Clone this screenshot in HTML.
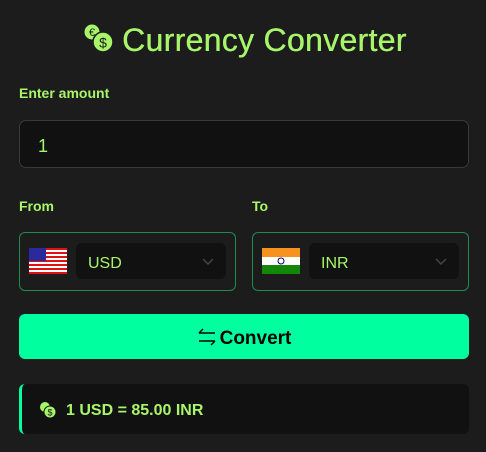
<!DOCTYPE html>
<html><head><style>
body{margin:0;background:#1c1c1c;width:486px;height:452px;overflow:hidden;font-family:"Liberation Sans",sans-serif;color:#a8f56a;position:relative}
.a{position:absolute}
h1{position:absolute;left:122px;top:20px;margin:0;font-size:32px;font-weight:normal;line-height:40px;color:#a8f56a;letter-spacing:0.3px;text-shadow:0.4px 0 0 #a8f56a}
.lbl{font-size:14px;font-weight:bold}
.inp{left:19px;top:120px;width:448px;height:46px;background:#111;border:1px solid #3a3a3a;border-radius:7px}
.sel{top:232px;width:215px;height:57px;border:1px solid #1f8a52;border-radius:6px}
.inner{top:10px;left:56px;width:150px;height:36px;background:#111;border-radius:6px;font-size:16px}
.btn{left:19px;top:314px;width:450px;height:45px;background:#00ff9f;border-radius:6px;color:#000;font-weight:bold;font-size:19px;text-align:center;line-height:50px}
.res{left:19px;top:384px;width:450px;height:50px;background:#111;border-radius:6px;border-left:3px solid #00ff9f;box-sizing:border-box}
</style></head><body>
<svg class="a" style="left:82px;top:22px" width="34" height="32" viewBox="0 0 34 32">
<circle cx="10" cy="10" r="8" fill="#a8f56a" stroke="#1c1c1c" stroke-width="1"/>
<text x="10" y="14" font-size="11" text-anchor="middle" fill="#1c1c1c" font-family="Liberation Sans">€</text>
<circle cx="21" cy="20" r="10" fill="#a8f56a" stroke="#1c1c1c" stroke-width="1.5"/>
<text x="21" y="25.5" font-size="14" text-anchor="middle" fill="#1c1c1c" font-family="Liberation Sans">$</text>
</svg>
<h1>Currency Converter</h1>
<div class="a lbl" style="left:19px;top:85px">Enter amount</div>
<div class="a inp"><span class="a" style="left:18px;top:15px;font-size:18px">1</span></div>
<div class="a lbl" style="left:19px;top:198px">From</div>
<div class="a lbl" style="left:252px;top:198px">To</div>
<div class="a sel" style="left:19px">
<svg class="a" style="left:9px;top:15px" width="38" height="26" viewBox="0 0 38 26">
<rect width="38" height="26" fill="#fff"/>
<g fill="#e01010"><rect y="0" width="38" height="2"/><rect y="4" width="38" height="2"/><rect y="8" width="38" height="2"/><rect y="12" width="38" height="2"/><rect y="16" width="38" height="2"/><rect y="20" width="38" height="2"/><rect y="24" width="38" height="2"/></g>
<rect width="17" height="13" fill="#2a2a9c"/></svg>
<div class="a inner"><span class="a" style="left:12px;top:12px">USD</span>
<svg class="a" style="left:126px;top:15px" width="12" height="8"><path d="M1 1l5 5 5-5" stroke="#444" stroke-width="1.5" fill="none"/></svg></div></div>
<div class="a sel" style="left:252px">
<svg class="a" style="left:9px;top:15px" width="38" height="26" viewBox="0 0 38 26">
<rect width="38" height="9" fill="#f7921e"/><rect y="9" width="38" height="8" fill="#fff"/><rect y="17" width="38" height="9" fill="#138808"/><circle cx="19" cy="13" r="3" fill="none" stroke="#000080"/></svg>
<div class="a inner"><span class="a" style="left:12px;top:12px">INR</span>
<svg class="a" style="left:126px;top:15px" width="12" height="8"><path d="M1 1l5 5 5-5" stroke="#444" stroke-width="1.5" fill="none"/></svg></div></div>
<div class="a btn"><svg width="20" height="20" viewBox="0 0 20 20" style="vertical-align:-3px;margin-right:3px"><path d="M2 6h16M2 6l4-4M18 14H2M18 14l-4 4" stroke="#000" stroke-width="1.4" fill="none"/></svg>Convert</div>
<div class="a res">
<svg class="a" style="left:17px;top:17px" width="18" height="18" viewBox="0 0 18 18"><circle cx="6" cy="6" r="5" fill="#a8f56a"/><circle cx="11" cy="11" r="6" fill="#a8f56a" stroke="#111"/><text x="11" y="14.5" font-size="9" text-anchor="middle" fill="#111">$</text></svg>
<span class="a" style="left:44px;top:18px;font-size:16px;font-weight:bold">1 USD = 85.00 INR</span></div>
</body></html>
